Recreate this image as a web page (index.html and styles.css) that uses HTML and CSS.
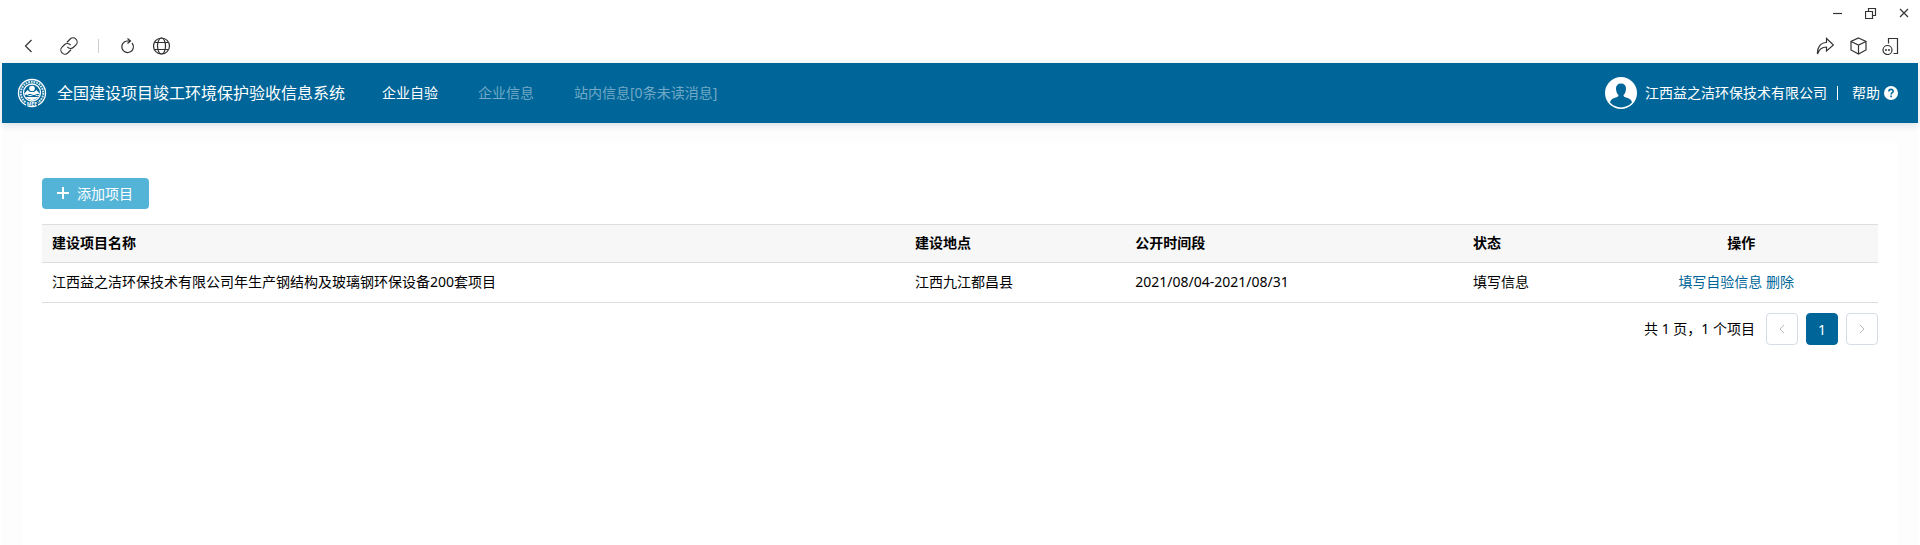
FILE: index.html
```html
<!DOCTYPE html>
<html lang="zh-CN">
<head>
    <meta charset="UTF-8">
    <meta name="viewport" content="width=device-width, initial-scale=1.0">
    <title>全国建设项目竣工环境保护验收信息系统</title>
    <link rel="stylesheet" href="styles.css">
</head>
<body>
    <div class="window-bar">
        <button class="window-btn" aria-label="最小化">
            <svg width="12" height="12" viewBox="0 0 12 12"><path d="M1 6.500h9"/></svg>
        </button>
        <button class="window-btn" aria-label="还原">
            <svg width="12" height="12" viewBox="0 0 12 12"><path d="M.5 4.500h7v7h-7zM3.500 4.500v-3h7v7h-3"/></svg>
        </button>
        <button class="window-btn" aria-label="关闭">
            <svg width="12" height="12" viewBox="0 0 12 12"><path d="M2 2l8 8M10 2l-8 8"/></svg>
        </button>
    </div>

    <div class="toolbar">
        <div class="tool-group">
            <button class="tool-btn" aria-label="后退">
                <svg width="18" height="18" viewBox="0 0 18 18"><path d="M11.500 3L5.500 9l6 6"/></svg>
            </button>
            <button class="tool-btn" aria-label="链接">
                <svg width="18" height="18" viewBox="1 1 22 22"><path d="M10 13a5 5 0 0 0 7.540.54l3-3a5 5 0 0 0-7.070-7.070l-3 3a5 5 0 0 0-.9 1.300M14 11a5 5 0 0 0-7.540-.54l-3 3a5 5 0 0 0 7.070 7.070l3-3a5 5 0 0 0 .9-1.300" stroke-width="1.400"/></svg>
            </button>
        </div>
        <span class="tool-divider"></span>
        <div class="tool-group tool-group-near">
            <button class="tool-btn" aria-label="刷新">
                <svg width="18" height="18" viewBox="0 0 18 18"><path d="M11 4H8A5.800 5.800 0 1 0 13 6M8.500 1.500L11.500 4 8.500 6.500"/></svg>
            </button>
            <button class="tool-btn" aria-label="网络">
                <svg width="18" height="18" viewBox="0 0 18 18"><circle cx="8.500" cy="9" r="8"/><ellipse cx="8.500" cy="9" rx="4" ry="8"/><path d="M1.500 5.500h14M1.500 12.500h14"/></svg>
            </button>
        </div>
        <div class="tool-group tool-group-end">
            <button class="tool-btn" aria-label="分享">
                <svg width="18" height="18" viewBox="0 0 18 18"><path d="M1.500 17c-.5-6.500 3-11.500 9-11.500V1.500l7 6.500-7 6v-4c-4.500 0-7.500 2.500-9 7z"/></svg>
            </button>
            <button class="tool-btn" aria-label="应用">
                <svg width="18" height="18" viewBox="0 0 18 18"><path d="M9.500 1L17 4.500v8.500l-7.500 4-7.500-4V4.500zM2 4.500L9.500 8 17 4.500M9.500 8v9"/></svg>
            </button>
            <button class="tool-btn" aria-label="更多">
                <svg width="18" height="18" viewBox="0 0 18 18"><path d="M6.500 6.500v-5h9v15h-4"/><circle cx="5.500" cy="13" r="4.500"/><path d="M3 13h2M6 13h2" stroke-width="1.500"/></svg>
            </button>
        </div>
    </div>

    <header class="header">
        <svg class="logo" width="30" height="30" viewBox="0 0 30 30">
            <circle cx="15" cy="15" r="13.500" fill="none" stroke="#fff" stroke-width="1.300"/>
            <circle cx="15" cy="15" r="11.200" fill="none" stroke="#d5e7f0" stroke-width="2" stroke-dasharray="1.800 .9"/>
            <circle cx="15" cy="14.500" r="8.500" fill="#069" stroke="#fff" stroke-width="1.300"/>
            <circle cx="15" cy="10.500" r="2.800" fill="#fff"/>
            <path d="M7 16l3.500-4 2.500 2h4l2.500-2 3.500 4z" fill="#fff"/>
            <path d="M7.500 17q2-1.500 3.700 0t3.800 0 3.800 0 3.700 0" fill="none" stroke="#fff"/>
            <path d="M8.500 19h13q-6.500 6.500-13 0z" fill="#fff"/>
            <path d="M9 24h12v4h-12z" fill="#069"/>
            <text x="15" y="28" class="logo-text">MEE</text>
        </svg>
        <h1 class="title">全国建设项目竣工环境保护验收信息系统</h1>
        <nav class="nav">
            <a href="#" class="nav-link active">企业自验</a>
            <a href="#" class="nav-link">企业信息</a>
            <a href="#" class="nav-link">站内信息[0条未读消息]</a>
        </nav>
        <div class="user">
            <svg width="32" height="32" viewBox="0 0 32 32">
                <circle cx="16" cy="16" r="16" fill="#fff"/>
                <path d="M16 6.500c-3.500 0-5.200 2.300-5 5.500.2 3 1.200 4.800 2.500 6 0 1.500-1 2-3.500 2.800-2.800.9-4.500 2-5 4.700a14.800 14.800 0 0 0 22 0c-.5-2.700-2.200-3.800-5-4.700-2.500-.8-3.500-1.300-3.500-2.800 1.300-1.200 2.300-3 2.500-6 .2-3.200-1.500-5.500-5-5.500z" fill="#069"/>
            </svg>
            <span class="user-name">江西益之洁环保技术有限公司</span>
            <span class="user-divider"></span>
            <a href="#" class="help">帮助
                <svg width="14" height="14" viewBox="0 0 14 14">
                    <circle cx="7" cy="7" r="7" fill="#fff"/>
                    <path d="M4.900 5.500c0-2.900 4.300-2.700 4.300-.3 0 1.500-2.100 1.500-2.100 3.200M7.100 9.500v1.700" fill="none" stroke="#069" stroke-width="1.600"/>
                </svg>
            </a>
        </div>
    </header>

    <main class="page">
        <section class="card">
            <button class="add-btn">
                <svg width="12" height="12" viewBox="0 0 12 12"><path d="M6 0v12M0 6h12" stroke="#fff" stroke-width="2"/></svg>
                添加项目
            </button>

            <table class="project-table">
                <colgroup>
                    <col class="col-name">
                    <col class="col-place">
                    <col class="col-time">
                    <col class="col-status">
                    <col class="col-action">
                </colgroup>
                <thead>
                    <tr>
                        <th>建设项目名称</th>
                        <th>建设地点</th>
                        <th>公开时间段</th>
                        <th>状态</th>
                        <th class="action">操作</th>
                    </tr>
                </thead>
                <tbody>
                    <tr>
                        <td>江西益之洁环保技术有限公司年生产钢结构及玻璃钢环保设备200套项目</td>
                        <td>江西九江都昌县</td>
                        <td>2021/08/04-2021/08/31</td>
                        <td>填写信息</td>
                        <td class="action"><a href="#">填写自验信息</a> <a href="#">删除</a></td>
                    </tr>
                </tbody>
            </table>

            <div class="pagination">
                <span class="page-total">共 1 页，1 个项目</span>
                <button class="page-btn" aria-label="上一页" disabled>
                    <svg width="10" height="10" viewBox="0 0 10 10"><path d="M7 1L3 5l4 4"/></svg>
                </button>
                <button class="page-btn current">1</button>
                <button class="page-btn" aria-label="下一页" disabled>
                    <svg width="10" height="10" viewBox="0 0 10 10"><path d="M3 1l4 4-4 4"/></svg>
                </button>
            </div>
        </section>
    </main>
</body>
</html>
```
FILE: styles.css
```css
* {
    box-sizing: border-box;
}

body {
    display: flex;
    flex-direction: column;
    min-height: 100vh;
    margin: 0;
    background-color: #fff;
    color: #000;
    font-family: "Noto Sans", "Noto Sans CJK SC", sans-serif;
    font-size: 14px;
    line-height: 20px;
}

a {
    color: #069;
    text-decoration: none;
}

button {
    padding: 0;
    border: none;
    background: none;
    font-family: inherit;
    font-size: 14px;
    cursor: pointer;
}

svg {
    display: block;
    flex-shrink: 0;
}

/* window buttons and toolbar */
.window-bar {
    display: flex;
    justify-content: flex-end;
    align-items: center;
    gap: 21px;
    height: 25px;
    padding-right: 10px;
}

.toolbar {
    display: flex;
    align-items: center;
    height: 38px;
    padding: 3px 20px 0;
}

.window-btn svg,
.tool-btn svg {
    fill: none;
    stroke: #333;
    stroke-width: 1.2;
}

.tool-group {
    display: flex;
    gap: 22px;
}

.tool-group-near {
    gap: 16px;
}

.tool-group-end {
    gap: 15px;
    margin-left: auto;
}

.tool-divider {
    width: 1px;
    height: 14px;
    margin: 0 20px;
    background-color: #ccc;
}

/* header */
.header {
    position: relative;
    display: flex;
    align-items: center;
    height: 60px;
    margin: 0 2px;
    padding: 0 20px 0 15px;
    background-color: #069;
    color: #fff;
    box-shadow: 0 2px 8px rgba(0, 50, 80, 0.15);
}

.logo-text {
    fill: #fff;
    font-size: 5px;
    font-weight: bold;
    text-anchor: middle;
}

.title {
    margin: 0 37px 0 10px;
    font-size: 16px;
    font-weight: normal;
    white-space: nowrap;
}

.nav {
    display: flex;
    gap: 40px;
}

.nav-link {
    color: #70a9c6;
    white-space: nowrap;
}

.nav-link.active {
    color: #fff;
}

.user {
    display: flex;
    align-items: center;
    margin-left: auto;
    white-space: nowrap;
}

.user-name {
    margin-left: 8px;
}

.user-divider {
    width: 1px;
    height: 14px;
    margin: 0 14px 0 10px;
    background-color: #fff;
}

.help {
    display: flex;
    align-items: center;
    gap: 4px;
    color: #fff;
}

/* content */
.page {
    display: flex;
    flex: 1;
    margin: 0 2px;
    padding: 20px 20px 0;
    background-color: #fdfdfd;
}

.card {
    flex: 1;
    padding: 35px 20px 20px;
    background-color: #fff;
}

.add-btn {
    display: flex;
    align-items: center;
    gap: 8px;
    height: 31px;
    padding: 0 16px 2px 15px;
    border-radius: 4px;
    background-color: #54b4d8;
    color: #fff;
}

.project-table {
    width: 100%;
    margin-top: 15px;
    border-collapse: collapse;
    table-layout: fixed;
}

.col-name {
    width: 47%;
}

.col-place {
    width: 12%;
}

.col-time {
    width: 18.4%;
}

.col-status {
    width: 7.7%;
}

.col-action {
    width: 14.9%;
}

.project-table th,
.project-table td {
    padding: 8px 10px 9px;
    border-top: 1px solid #ddd;
    border-bottom: 1px solid #ddd;
    text-align: left;
}

.project-table td {
    padding: 9px 10px 10px;
}

.project-table th {
    background-color: #f7f7f7;
}

.project-table .action {
    text-align: center;
}

.project-table td.action {
    padding-right: 20px;
}

.pagination {
    display: flex;
    justify-content: flex-end;
    align-items: center;
    gap: 8px;
    margin-top: 10px;
}

.page-total {
    margin-right: 3px;
}

.page-btn {
    display: flex;
    justify-content: center;
    align-items: center;
    width: 32px;
    height: 32px;
    border: 1px solid #d7dde4;
    border-radius: 4px;
    background-color: #fff;
}

.page-btn svg {
    fill: none;
    stroke: #bbb;
}

.page-btn.current {
    border-color: #069;
    background-color: #069;
    color: #fff;
}
```
